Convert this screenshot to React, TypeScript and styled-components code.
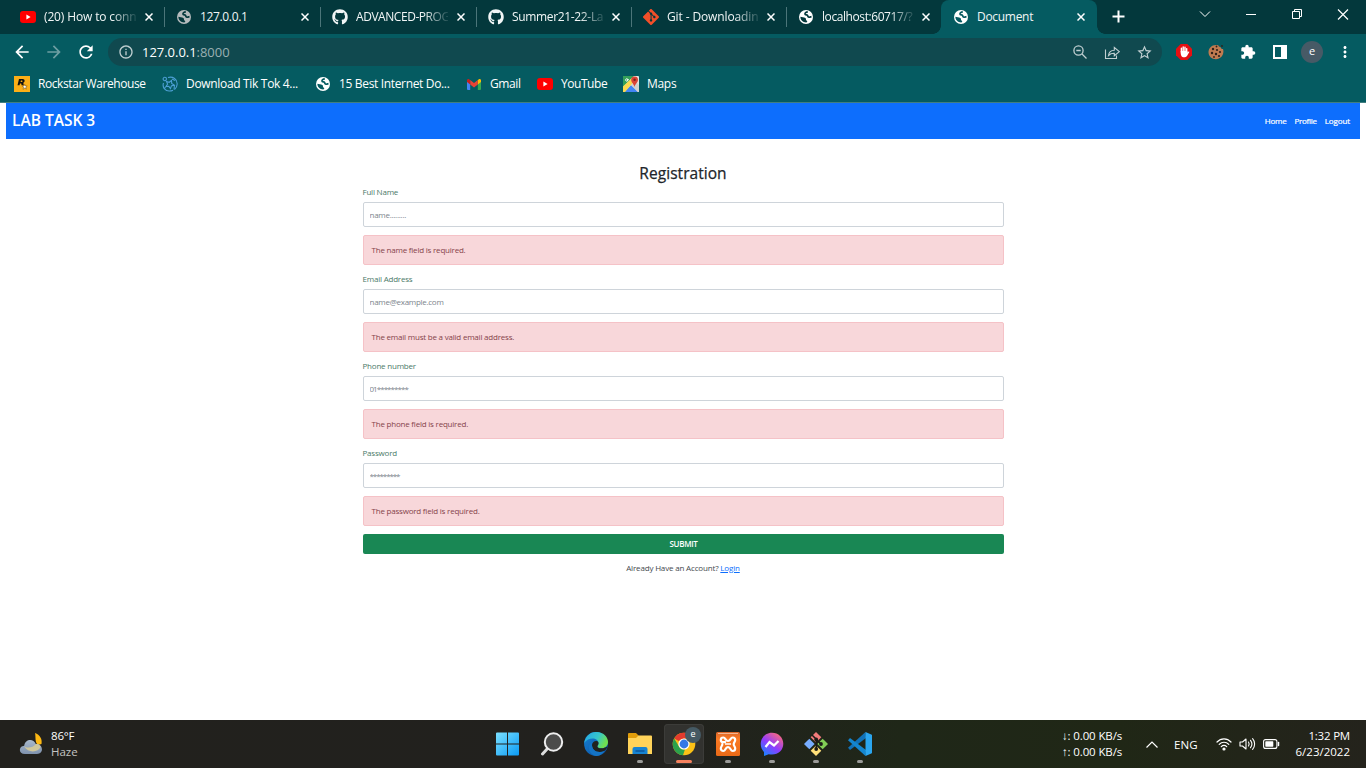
import React from "react";
import styled, { createGlobalStyle, css } from "styled-components";
import { FaGithub } from "react-icons/fa";
import { SiGit } from "react-icons/si";
import { MdArrowBack, MdArrowForward, MdRefresh, MdExtension, MdMoreVert, MdStarBorder, MdInfoOutline } from "react-icons/md";

const Global = createGlobalStyle`
  *, *::before, *::after { box-sizing: border-box; }
  html, body { margin: 0; background: #fff; overflow: hidden; }
  body { font-family: "Open Sans", "Noto Sans", sans-serif; font-size: 12px; }
`;

const Screen = styled.div`
  width: 1366px;
  height: 768px;
  display: flex;
  flex-direction: column;
  overflow: hidden;
`;

const Txt = styled.span<{ $ls?: number }>`
  white-space: nowrap;
  letter-spacing: ${(p) => p.$ls ?? 0}px;
`;

/* Browser chrome */
const TabStrip = styled.div`
  height: 34px;
  flex: none;
  display: flex;
  padding-left: 8px;
  background: #03383c;
  color: #f1f6f6;
`;
const Tab = styled.div<{ $w: number; $active?: boolean; $line?: boolean }>`
  position: relative;
  width: ${(p) => p.$w}px;
  height: 34px;
  flex: none;
  display: flex;
  align-items: center;
  justify-content: space-between;
  padding: 0 11px 0 12px;
  ${(p) =>
    p.$active &&
    css`
      padding-right: 12px;
      background: #055b61;
      border-radius: 8px 8px 0 0;
      &::before,
      &::after {
        content: "";
        position: absolute;
        bottom: 0;
        width: 8px;
        height: 8px;
      }
      &::before {
        left: -8px;
        background: radial-gradient(circle at 0 0, transparent 7.5px, #055b61 8px);
      }
      &::after {
        right: -8px;
        background: radial-gradient(circle at 100% 0, transparent 7.5px, #055b61 8px);
      }
    `}
  ${(p) =>
    p.$line &&
    css`
      &::after {
        content: "";
        position: absolute;
        right: -1px;
        top: 7px;
        width: 1px;
        height: 20px;
        background: #4b7579;
      }
    `}
`;
const TabLabel = styled.div`
  display: flex;
  align-items: center;
  gap: 8px;
`;
const IconBox = styled.span`
  width: 16px;
  height: 16px;
  flex: none;
  display: flex;
  align-items: center;
  justify-content: center;
`;
const TabTitle = styled.span<{ $fade?: boolean; $ls: number }>`
  width: 92px;
  flex: none;
  overflow: hidden;
  white-space: nowrap;
  line-height: 18px;
  letter-spacing: ${(p) => p.$ls}px;
  ${(p) => p.$fade && css`mask-image: linear-gradient(to right, #000 68px, transparent 95px);`}
`;
const WindowButtons = styled.div`
  margin-left: auto;
  display: flex;
  height: 29px;
  svg { width: 46px; height: 29px; }
`;
const NewTab = styled.div`
  padding: 10px 0 0 15px;
`;
const Toolbar = styled.div`
  height: 36px;
  flex: none;
  display: flex;
  align-items: center;
  background: #055b61;
  color: #fff;
`;
const NavButtons = styled.div`
  width: 108px;
  height: 36px;
  display: flex;
  align-items: center;
  gap: 12px;
  padding-left: 12px;
`;
const AddressBar = styled.div`
  width: 1054px;
  height: 28px;
  border-radius: 14px;
  display: flex;
  align-items: center;
  padding: 0 9px 0 10px;
  background: #10494f;
  color: #c0cfd1;
  font-size: 13px;
`;
const Url = styled.span`
  margin-left: 8px;
  letter-spacing: -0.03px;
  b { font-weight: 400; color: #fff; }
  color: #9bb0b2;
`;
const AddressActions = styled.div`
  margin-left: auto;
  display: flex;
  gap: 16px;
`;
const Extensions = styled.div`
  display: flex;
  align-items: center;
  padding-left: 14px;
  gap: 16px;
`;
const Avatar = styled.span`
  width: 22px;
  height: 22px;
  margin: 0 -3px;
  border-radius: 50%;
  background: #475a66;
  font-size: 11px;
  line-height: 20px;
  text-align: center;
`;
const Bookmarks = styled.div`
  height: 33px;
  flex: none;
  display: flex;
  align-items: center;
  padding: 0 14px 4px;
  background: #055b61;
  border-bottom: 1px solid #417e80;
  color: #fff;
`;
const Bookmark = styled.div<{ $w: number }>`
  width: ${(p) => p.$w}px;
  height: 20px;
  display: flex;
  align-items: center;
  gap: 8px;
  line-height: 16px;
`;

/* Page */
const Page = styled.main`
  flex: 1;
  padding: 0 6px;
  background: #fff;
  font-size: 8px;
  letter-spacing: -0.21px;
  color: #212529;
`;
const NavBar = styled.nav`
  height: 36px;
  display: flex;
  align-items: center;
  justify-content: space-between;
  padding: 0 10px 1px 6px;
  background: #0d6efd;
  color: #fff;
`;
const Brand = styled.span`
  font-size: 15.5px;
  line-height: 20px;
  font-weight: 600;
  letter-spacing: 0;
  margin-bottom: 1px;
`;
const NavLinks = styled.div`
  display: flex;
  gap: 8px;
  line-height: 11px;
  -webkit-text-stroke: 0.2px #fff;
`;
const Form = styled.form`
  width: 642px;
  margin: 23px auto 0;
  display: flex;
  flex-direction: column;
`;
const Heading = styled.h2`
  margin: 0;
  height: 24px;
  line-height: 23px;
  font-size: 15.5px;
  font-weight: 500;
  letter-spacing: 0.05px;
  -webkit-text-stroke: 0.25px #212529;
  text-align: center;
`;
const Field = styled.div`
  height: 87px;
  display: flex;
  flex-direction: column;
`;
const Label = styled.label`
  height: 16px;
  padding-left: 0.5px;
  line-height: 12px;
  color: #4b7a68;
  white-space: nowrap;
`;
const Input = styled.input<{ $ls: number }>`
  height: 25px;
  margin: 0 0 8px 1px;
  width: 641px;
  padding: 0 6px 0 5.5px;
  border: 1px solid #ced4da;
  border-radius: 2px;
  font: inherit;
  letter-spacing: ${(p) => p.$ls}px;
  outline: none;
  &::placeholder { color: #7d858c; opacity: 1; }
`;
const Alert = styled.div`
  height: 30px;
  width: 641px;
  margin-left: 1px;
  padding: 0 7.5px;
  line-height: 28px;
  border: 1px solid #f5c2c7;
  border-radius: 2px;
  background: #f8d7da;
  color: #85434a;
`;
const Submit = styled.button`
  height: 20px;
  width: 641px;
  margin-left: 1px;
  border: 0;
  border-radius: 2px;
  background: #198754;
  color: #fff;
  font: 600 8px/20px "Open Sans", sans-serif;
  letter-spacing: -0.3px;
  padding: 0;
`;
const Footer = styled.p`
  margin: 8px 0 0;
  line-height: 12px;
  letter-spacing: -0.17px;
  text-align: center;
  color: #44494e;
  a { color: #0d6efd; }
`;

/* Taskbar */
const TaskBar = styled.footer`
  height: 48px;
  flex: none;
  display: grid;
  grid-template-columns: 486px 396px 1fr;
  background: linear-gradient(90deg, #22211d 0%, #22211e 48%, #1f2718 66%, #202716 82%, #24231c 100%);
  color: #fff;
`;
const Weather = styled.div`
  display: flex;
  padding-left: 18px;
  gap: 7px;
  align-items: center;
`;
const Lines = styled.div<{ $right?: boolean }>`
  display: flex;
  flex-direction: column;
  line-height: 16px;
  font-size: 11.5px;
  text-align: ${(p) => (p.$right ? "right" : "left")};
`;
const Muted = styled(Txt)`color: #c4c4c2;`;
const Apps = styled.div`
  display: flex;
`;
const TaskApp = styled.div<{ $active?: boolean; $running?: boolean }>`
  position: relative;
  width: 40px;
  height: 40px;
  margin: 4px 2px;
  display: flex;
  align-items: center;
  justify-content: center;
  border-radius: 4px;
  ${(p) => p.$active && css`background: #32322f; box-shadow: inset 0 0 0 1px #3c3c39;`}
  ${(p) =>
    (p.$running || p.$active) &&
    css`
      &::after {
        content: "";
        position: absolute;
        bottom: 1px;
        left: 50%;
        transform: translateX(-50%);
        width: ${p.$active ? 16 : 6}px;
        height: 3px;
        border-radius: 2px;
        background: ${p.$active ? "#f7825f" : "#9b9b99"};
      }
    `}
`;
const Badge = styled.span`
  position: absolute;
  top: 3px;
  right: 3px;
  width: 16px;
  height: 16px;
  border-radius: 50%;
  background: #455a64;
  font-size: 9px;
  line-height: 14px;
  text-align: center;
`;
const Tray = styled.div`
  display: flex;
  align-items: center;
  justify-content: flex-end;
  padding-right: 16px;
`;
const Speed = styled(Lines)`margin-right: 24px;`;
const TrayIcons = styled.div`
  display: flex;
  align-items: center;
  gap: 7px;
  margin: 0 16px 0 18px;
`;
const Lang = styled(Txt)`
  margin-left: 16px;
  font-size: 11.5px;
`;

const Globe = ({ color = "#fff", land = "#055b61" }: { color?: string; land?: string }) => (
  <svg width="14" height="14" viewBox="0 0 14 14">
    <circle cx="7" cy="7" r="7" fill={color} />
    <path d="M8.800 1.800C7 2 5.800 3.100 6 4.100c.2 1 2 .5 2.500 1.300.4.800.2 1.600 1.400 1.800 1 .2 1.700-.4 2.600-.6" fill="none" stroke={land} strokeWidth="1.700" />
    <path d="M1.400 6.800C2.800 7.400 5 7.200 6.300 8c1.200.8.300 1.600.9 2.300.4.500 1 .6 1 1.300 0 .6-.5.900-1.100.9C4 12.500 1.300 10 1.400 6.800z" fill={land} />
  </svg>
);
const CloseX = () => (
  <svg width="8" height="8" viewBox="0 0 8 8"><path d="M.5.5l7 7m0-7l-7 7" stroke="#fff" strokeWidth="1.500" /></svg>
);
const YouTube = () => (
  <svg width="16" height="12" viewBox="0 0 16 12"><rect width="16" height="12" rx="3" fill="#f00" /><path d="M6.400 3.500v5L10.600 6z" fill="#fff" /></svg>
);
const Gmail = () => (
  <svg width="14" height="11" viewBox="0 0 14 11">
    <path d="M0 1.500h3.200V11H1a1 1 0 0 1-1-1z" fill="#4285f4" /><path d="M10.800 1.500H14V10a1 1 0 0 1-1 1h-2.200z" fill="#34a853" />
    <path d="M10.800 1L12 .2c.9-.6 2 0 2 1.100V3l-3.200 2.500z" fill="#fbbc04" /><path d="M3.200 1L7 3.900 10.800 1v4.500L7 8.400 3.200 5.500z" fill="#ea4335" /><path d="M0 3V1.300C0 .2 1.100-.4 2 .2L3.200 1v4.500z" fill="#c5221f" />
  </svg>
);
const Maps = () => (
  <svg width="16" height="16" viewBox="0 0 16 16">
    <rect width="16" height="16" rx="1" fill="#e4e4e0" /><path d="M0 0h11L0 11z" fill="#34a05a" /><path d="M1 16l7-7 7 7z" fill="#4285f4" /><path d="M0 14V10.500L9 2l2.500 3L2 16H0z" fill="#fbd84d" /><path d="M8 9l7 7h1v-7l-3-3z" fill="#d2d2cf" />
    <path d="M5.900 3.500H4v1h1a1.300 1.300 0 1 1-.3-1.500" fill="none" stroke="#fff" strokeWidth=".8" />
    <path d="M11.500 11C11 8 8.200 6.800 8.200 3.800a3.400 3.400 0 0 1 6.800 0C15 6.800 12 8 11.500 11z" fill="#db4437" /><circle cx="11.600" cy="3.800" r="1.200" fill="#7b231c" />
  </svg>
);
const Rockstar = () => (
  <svg width="16" height="16" viewBox="0 0 16 16">
    <rect width="16" height="16" fill="#fcaf17" /><path d="M5 3h3.700c2.500 0 2.500 3.300.4 3.900.9.400.4 1.500.6 2.400H7.500c-.2-.8.300-1.900-.6-1.900H6L5.500 9.300H3.500zM6.900 4.500l-.3 1.400h1.100c1.100 0 1.100-1.400.2-1.400z" fill="#111" />
    <path d="M10.700 8.300l.6 1.700h1.900l-1.400 1.200.6 1.900-1.700-1-1.700 1.200.6-2-1.400-1.200H10z" fill="#fff" stroke="#6b4a10" strokeWidth=".5" />
  </svg>
);
const TikTokSite = () => (
  <svg width="16" height="16" viewBox="0 0 16 16" fill="none" stroke="#4d9fd4" strokeWidth="1.100">
    <circle cx="2.800" cy="3" r="1.700" /><path d="M6 1.500c5-1.500 9.400 2 9.200 6.500-.1 3-1.500 4.500-2.700 5.500M1.500 7c-1.500 4 1.700 8.200 6 8 1.500 0 2.500-.3 3.500-.8" /><path d="M4.500 5.500l2.700.8L9.500 4.500l.2 2.900 2.500 1.600-2.800.9-.9 2.700-1.700-2.300-2.800.2 1.600-2.400zM4 10.500L2 13M10 3l3 1.500M12.500 9l-.5 4.500" />
  </svg>
);
const ZoomOut = () => (
  <svg width="16" height="16" viewBox="0 0 16 16" fill="none" stroke="currentColor" strokeWidth="1.300"><circle cx="6.500" cy="6.500" r="4.600" /><path d="M10 10l4.500 4.500M4.300 6.500h4.400" /></svg>
);
const Share = () => (
  <svg width="16" height="16" viewBox="0 0 16 16" fill="none" stroke="currentColor" strokeWidth="1.100"><path d="M1.500 5.500v9h11v-3M4.500 11.500c.4-3.400 2.500-5.200 5.800-5.300V3.500l5 4.200-5 4.100V9.300c-2.500-.1-4.300.6-5.800 2.200z" /></svg>
);
const StopHand = () => (
  <svg width="16" height="16" viewBox="0 0 16 16"><path d="M4.700 0h6.600L16 4.700v6.600L11.300 16H4.700L0 11.300V4.700z" fill="#e60f12" /><path d="M5.400 8V4.300M7.200 7.500V3M9 7.500V3.300M10.700 8V4.600" stroke="#fff" strokeWidth="1.400" strokeLinecap="round" /><path d="M4.700 7h6.700v1.500l1.200-1c.6-.3 1 .1.700.6L11 12c-1.500 2-4.800 1.700-5.700-.3C4.600 10 4.700 9 4.700 7z" fill="#fff" /></svg>
);
const Cookie = () => (
  <svg width="16" height="16" viewBox="0 0 16 16"><path d="M8 1c1 0 1.500 0 2.300.3.300 1.200 1.200 1.700 2.200 1.600.2 1.300 1.200 2 2.500 2.100 1.700 5.200-2 10.300-7 10.300C3.500 15.300.5 12 .5 8.300S3.500 1 8 1z" fill="#c07b50" /><g fill="#30211a"><circle cx="5" cy="5" r="1.200" /><circle cx="9" cy="6" r="1.100" /><circle cx="4" cy="9" r="1.200" /><circle cx="8" cy="10" r="1.200" /><circle cx="12" cy="8" r="1.100" /><circle cx="6" cy="13" r=".9" /><circle cx="11" cy="12" r="1.100" /><circle cx="8.500" cy="2.500" r=".9" /><circle cx="14" cy="2" r=".9" /></g></svg>
);
const WeatherIcon = () => (
  <svg width="26" height="24" viewBox="0 0 26 24">
    <defs><linearGradient id="cl" x1="0" y1="0" x2="0" y2="1"><stop offset="0" stopColor="#a9b9cc" /><stop offset="1" stopColor="#7f92ad" /></linearGradient></defs>
    <path d="M17 1c5 2 7.500 6 6.500 11L20 13C16.500 10 18 5 17 1z" fill="#fdb813" />
    <path d="M7 22c-7 0-6.500-8-.8-8.200C7 7 15.500 6 17.800 12 25 11 26.500 22 19 22z" fill="url(#cl)" />
    <path d="M6 14c3 3 9 1.500 12-2 3 0 4 1.500 4.500 3-2 5-12 7-16.500-1z" fill="#d0c79b" />
  </svg>
);
const WindowsLogo = () => (
  <svg width="24" height="24" viewBox="0 0 24 24"><defs><linearGradient id="wi" x2="1" y2="1"><stop stopColor="#7be0ff" /><stop offset="1" stopColor="#0b9bf5" /></linearGradient></defs><path d="M1 .5H11V11.500H0V1.500a1 1 0 0 1 1-1zM12 .5H22a1 1 0 0 1 1 1V11.500H12zM0 12.500H11V23.500H1a1 1 0 0 1-1-1zM12 12.500H23V22.500a1 1 0 0 1-1 1H12z" fill="url(#wi)" /></svg>
);
const SearchIcon = () => (
  <svg width="24" height="24" viewBox="0 0 24 24"><path d="M8 16l-5.500 6" stroke="#ddd" strokeWidth="3" strokeLinecap="round" /><circle cx="13.500" cy="10" r="8.700" fill="#4c4c4b" stroke="#eee" strokeWidth="2" /></svg>
);
const EdgeIcon = () => (
  <svg width="24" height="24" viewBox="0 0 24 24"><defs><linearGradient id="eg" x2="1" y2=".4"><stop stopColor="#23a5e8" /><stop offset=".6" stopColor="#36c6ca" /><stop offset="1" stopColor="#70df50" /></linearGradient><linearGradient id="eb" x2="1" y2="1"><stop stopColor="#1583d8" /><stop offset="1" stopColor="#0c4b99" /></linearGradient></defs>
    <circle cx="12" cy="12" r="11.900" fill="url(#eb)" /><path d="M.2 11C1.500 3.500 7-.3 13 0c6 .2 11 4.600 11 10 0 4-3.300 6.300-6.600 6.300-3 0-4-.9-4-1.800 0-.7 1.100-1.200 1.100-3.200C14.500 5.500 4.500 4.500.2 11z" fill="url(#eg)" />
    <path d="M8 13c0-2 2-4 4.300-3.900 1.700.1 2.300 1.200 2.200 2.500-.2 1.600-1.200 2-1.100 2.900.1 1 1.200 1.800 4 1.800 2.500 0 4-.8 5-1.300.5-.2.900.2.600.7-1.500 3.300-4.300 4.300-7.500 4.300C10.500 20 8 16.500 8 13z" fill="#22231f" /><path d="M8 13c0 4 3 7 7.500 7 2 0 3.700-.4 5.300-1.300C18 22.800 14.500 24 12 24 7 23 5 19 5 15.500c0-3 1.600-4.700 3.600-6C8 10.500 8 12 8 13z" fill="#1474c6" />
  </svg>
);
const FolderIcon = () => (
  <svg width="24" height="24" viewBox="0 0 24 24"><path d="M0 2a1 1 0 0 1 1-1h7l2.500 2.500V8H0z" fill="#e19d0b" /><path d="M0 6h8l2.500-2.500H23a1 1 0 0 1 1 1V22H0z" fill="#ffd35a" /><path d="M4.500 22v-5a2 2 0 0 1 2-2h11a2 2 0 0 1 2 2v5z" fill="#1683d2" /><path d="M7.500 19h9" stroke="#0b559b" strokeWidth="1.500" /></svg>
);
const ChromeIcon = () => (
  <svg width="24" height="24" viewBox="0 0 24 24"><circle cx="12" cy="12" r="11.300" fill="#fbc116" /><path d="M12 .7a11.300 11.300 0 0 1 9.800 5.700H12A5.600 5.600 0 0 0 7.100 9.200L2.200 6.400A11.300 11.300 0 0 1 12 .7z" fill="#e33b2e" /><path d="M2.200 6.400l4.900 8.400a5.600 5.600 0 0 0 5.800 2.700L11 23.300A11.300 11.300 0 0 1 2.200 6.400z" fill="#2ba24c" /><circle cx="12" cy="12" r="5.600" fill="#fff" /><circle cx="12" cy="12" r="4.400" fill="#3478e5" /></svg>
);
const XamppIcon = () => (
  <svg width="24" height="24" viewBox="0 0 24 24"><defs><linearGradient id="xa" x2="0" y2="1"><stop stopColor="#d9672b" /><stop offset=".3" stopColor="#fb7a24" /><stop offset="1" stopColor="#e96a17" /></linearGradient></defs>
    <rect width="24" height="24" rx="1.500" fill="url(#xa)" /><path d="M2 1.500h20" stroke="#f3b48f" strokeWidth="1" />
    <path d="M9 10.200H6.800a2.300 2.300 0 0 1-2-2.300c0-1.500 1-2.400 2.500-2.400C9.800 5.500 9 9 12 9s2.200-3.500 4.700-3.500c1.500 0 2.500.9 2.500 2.400 0 1.800-1.500 2.600-1.500 4.300s1.500 2.500 1.500 4.300c0 1.500-1 2.500-2.500 2.500-2.500 0-1.700-3.800-4.700-3.800S9.800 19 7.300 19c-1.500 0-2.500-1-2.500-2.500 0-1.800 1.500-2.600 1.500-4.300" fill="none" stroke="#fff" strokeWidth="2.200" strokeLinejoin="round" strokeLinecap="round" /><path d="M9 12h6" stroke="#fff" strokeWidth="1.500" /></svg>
);
const MessengerIcon = () => (
  <svg width="24" height="24" viewBox="0 0 24 24"><defs><linearGradient id="ms" x1=".1" y1="1" x2=".8" y2="0"><stop stopColor="#0a8cff" /><stop offset=".5" stopColor="#913bff" /><stop offset="1" stopColor="#ff6b78" /></linearGradient></defs><path d="M12 .8c6.500 0 11.300 4.800 11.300 11S18.500 22.600 12 22.600c-1.200 0-2.300-.1-3.300-.4L4 24v-4C2 18 .7 15.200.7 11.800.7 5.600 5.500.8 12 .8z" fill="url(#ms)" /><path d="M5.500 15l4-5 4.500 3.500L18.500 9" fill="none" stroke="#fff" strokeWidth="2.300" /></svg>
);
const GitBash = () => (
  <svg width="24" height="24" viewBox="0 0 24 24"><path d="M12 0l5.300 5.300L12 10.600 6.700 5.300z" fill="#f47b7b" /><path d="M18.700 6.700L24 12l-5.300 5.300-5.300-5.300z" fill="#82ce56" /><path d="M12 13.400l5.300 5.300L12 24l-5.300-5.300z" fill="#ffe079" /><path d="M5.300 6.700l5.300 5.300-5.300 5.300L0 12z" fill="#77adff" /><path d="M8 3l4.300 4.300V17M12.500 8l4.500 4" fill="none" stroke="#1c1c19" strokeWidth="1.500" /><g fill="#1c1c19"><circle cx="12.200" cy="7.500" r="1.900" /><circle cx="17" cy="12" r="1.900" /><circle cx="12.200" cy="17" r="1.900" /></g></svg>
);
const VsCode = () => (
  <svg width="24" height="24" viewBox="0 0 24 24"><path d="M17.500 0L0 15.800l2 2.300L18 6z" fill="#1172b8" /><path d="M17.500 24L0 8.200l2-2.300L18 18z" fill="#1486cf" /><path d="M17.500 0L23.300 2.500a1 1 0 0 1 .7 1v17a1 1 0 0 1-.7 1L17.500 24z" fill="#2ba6ef" /></svg>
);
const Wifi = () => (
  <svg width="16" height="14" viewBox="0 0 16 14" fill="none" stroke="#fff" strokeWidth="1.200" strokeLinecap="round"><path d="M1 5c4-4.200 10-4.200 14 0M3.200 7.400c2.700-2.900 6.900-2.900 9.600 0M5.300 9.700c1.600-1.700 3.800-1.700 5.400 0" /><circle cx="8" cy="12" r="1" fill="#fff" /></svg>
);
const Volume = () => (
  <svg width="17" height="14" viewBox="0 0 17 14" fill="none" stroke="#fff" strokeWidth="1.100" strokeLinecap="round" strokeLinejoin="round"><path d="M1 5v4h2.500L7 12V2L3.500 5zM9.500 5c.8 1.200.8 2.800 0 4M11.500 3.300c1.700 2.200 1.700 5.200 0 7.400M13.600 1.700c2.700 3 2.700 7.600 0 10.600" /></svg>
);
const Battery = () => (
  <svg width="17" height="10" viewBox="0 0 17 10"><rect x=".6" y=".6" width="13.300" height="8.800" rx="2" fill="none" stroke="#fff" strokeWidth="1.100" /><rect x="2.300" y="2.300" width="8" height="5.400" rx=".6" fill="#fff" /><path d="M15.500 3.500v3" stroke="#fff" strokeWidth="1.500" strokeLinecap="round" /></svg>
);

const tabs = [
  { title: "(20) How to conn", w: 156, icon: <YouTube />, ls: -0.14, fade: true },
  { title: "127.0.0.1", w: 156, icon: <Globe color="#b5bbbd" land="#03383c" />, ls: -0.35 },
  { title: "ADVANCED-PROG", w: 156, icon: <FaGithub size={16} />, ls: -0.45, fade: true },
  { title: "Summer21-22-La", w: 155, icon: <FaGithub size={16} />, ls: -0.34, fade: true },
  { title: "Git - Downloadin", w: 155, icon: <SiGit size={16} color="#f34f29" />, ls: -0.12, fade: true },
  { title: "localhost:60717/?", w: 155, icon: <Globe land="#03383c" />, ls: -0.42, fade: true },
  { title: "Document", w: 156, icon: <Globe />, ls: -0.3, active: true },
];
const bookmarks = [
  { t: "Rockstar Warehouse", w: 148, icon: <Rockstar />, ls: -0.42 },
  { t: "Download Tik Tok 4...", w: 153, icon: <TikTokSite />, ls: -0.32 },
  { t: "15 Best Internet Do...", w: 151, icon: <Globe />, ls: -0.34 },
  { t: "Gmail", w: 71, icon: <Gmail />, ls: -0.4 },
  { t: "YouTube", w: 86, icon: <YouTube />, ls: -0.45 },
  { t: "Maps", w: 80, icon: <Maps />, ls: -0.3 },
];
const fields = [
  { label: "Full Name", ph: "name.........", ls: -0.28, error: "The name field is required." },
  { label: "Email Address", ph: "name@example.com", ls: -0.28, error: "The email must be a valid email address." },
  { label: "Phone number", ph: "01*********", ls: -0.95, error: "The phone field is required." },
  { label: "Password", ph: "*********", ls: -1.08, error: "The password field is required." },
];

export default function App() {
  return (
    <Screen>
      <Global />
      <TabStrip>
        {tabs.map((t, i) => (
          <Tab key={i} $w={t.w} $active={t.active} $line={i < 5}>
            <TabLabel>
              <IconBox>{t.icon}</IconBox>
              <TabTitle $ls={t.ls} $fade={t.fade}>{t.title}</TabTitle>
            </TabLabel>
            <CloseX />
          </Tab>
        ))}
        <NewTab><svg width="13" height="13" viewBox="0 0 13 13"><path d="M6.500.500v12m-6-6h12" stroke="#fff" strokeWidth="2" /></svg></NewTab>
        <WindowButtons>
          <svg viewBox="0 0 46 29" fill="none" stroke="#fff"><path d="M18 11.500l5 5 5-5" /></svg>
          <svg viewBox="0 0 46 29" fill="none" stroke="#fff"><path d="M18 14.500h10" /></svg>
          <svg viewBox="0 0 46 29" fill="none" stroke="#fff"><path d="M18.500 11.500h7v7h-7zM20.500 11.500v-2h7v7h-2" /></svg>
          <svg viewBox="0 0 46 29" fill="none" stroke="#fff"><path d="M18 9.500l10 10m0-10l-10 10" strokeWidth="1.200" /></svg>
        </WindowButtons>
      </TabStrip>
      <Toolbar>
        <NavButtons><MdArrowBack size={20} /><MdArrowForward size={20} color="#6e9ea2" /><MdRefresh size={20} /></NavButtons>
        <AddressBar>
          <MdInfoOutline size={16} />
          <Url><b>127.0.0.1</b>:8000</Url>
          <AddressActions><ZoomOut /><Share /><MdStarBorder size={17} /></AddressActions>
        </AddressBar>
        <Extensions>
          <StopHand /><Cookie /><MdExtension size={16} />
          <svg width="16" height="16" viewBox="0 0 16 16"><path d="M1 1h14v14H1zM3 3v10h6V3z" fill="#fff" fillRule="evenodd" /></svg>
          <Avatar>e</Avatar><MdMoreVert size={18} />
        </Extensions>
      </Toolbar>
      <Bookmarks>
        {bookmarks.map((b) => (
          <Bookmark key={b.t} $w={b.w}><IconBox>{b.icon}</IconBox><Txt $ls={b.ls}>{b.t}</Txt></Bookmark>
        ))}
      </Bookmarks>
      <Page>
        <NavBar>
          <Brand>LAB TASK 3</Brand>
          <NavLinks><Txt $ls={-0.25}>Home</Txt><Txt $ls={-0.25}>Profile</Txt><Txt $ls={-0.12}>Logout</Txt></NavLinks>
        </NavBar>
        <Form>
          <Heading>Registration</Heading>
          {fields.map((f) => (
            <Field key={f.label}>
              <Label>{f.label}</Label>
              <Input placeholder={f.ph} $ls={f.ls} />
              <Alert>{f.error}</Alert>
            </Field>
          ))}
          <Submit type="button">SUBMIT</Submit>
          <Footer>Already Have an Account? <a href="#login">Login</a></Footer>
        </Form>
      </Page>
      <TaskBar>
        <Weather><WeatherIcon /><Lines><Txt $ls={-0.2}>86°F</Txt><Muted>Haze</Muted></Lines></Weather>
        <Apps>
          <TaskApp><WindowsLogo /></TaskApp>
          <TaskApp><SearchIcon /></TaskApp>
          <TaskApp><EdgeIcon /></TaskApp>
          <TaskApp $running><FolderIcon /></TaskApp>
          <TaskApp $active><ChromeIcon /><Badge>e</Badge></TaskApp>
          <TaskApp $running><XamppIcon /></TaskApp>
          <TaskApp $running><MessengerIcon /></TaskApp>
          <TaskApp $running><GitBash /></TaskApp>
          <TaskApp $running><VsCode /></TaskApp>
        </Apps>
        <Tray>
          <Speed><Txt $ls={-0.12}>↓: 0.00 KB/s</Txt><Txt $ls={-0.12}>↑: 0.00 KB/s</Txt></Speed>
          <svg width="12" height="7" viewBox="0 0 12 7"><path d="M.5 6.500L6 1l5.500 5.500" fill="none" stroke="#fff" strokeWidth="1.200" /></svg>
          <Lang>ENG</Lang>
          <TrayIcons><Wifi /><Volume /><Battery /></TrayIcons>
          <Lines $right><Txt $ls={-0.2}>1:32 PM</Txt><Txt $ls={0}>6/23/2022</Txt></Lines>
        </Tray>
      </TaskBar>
    </Screen>
  );
}
